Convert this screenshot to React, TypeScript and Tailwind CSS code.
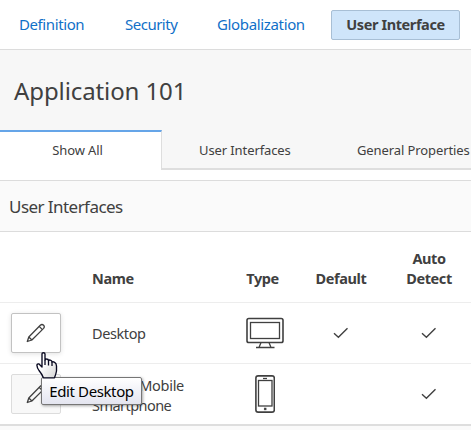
import React from "react";

function Pencil() {
  return (
    <svg width="20" height="20" viewBox="0 0 20 20" fill="none" stroke="#404040" strokeWidth="1.3" strokeLinejoin="round">
      <path d="M1.3 18.5 L2.8 14 L14.3 2.2 Q16 .7 17.6 2.2 Q19 3.8 17.6 5.4 L5.9 17 Z" />
      <path d="M2.8 14 L5.9 17 M13.2 3.4 L16.4 6.6" />
    </svg>
  );
}

function Check() {
  return (
    <svg width="16" height="12" viewBox="0 0 16 12" fill="none" stroke="#404040" strokeWidth="1.4">
      <path d="M1 6.3 L5.4 10.2 L14.5 1.3" />
    </svg>
  );
}

function Monitor() {
  return (
    <svg width="38" height="32" viewBox="0 0 38 32" fill="none" stroke="#404040" strokeWidth="1.6">
      <rect x="1" y="1.5" width="36" height="24" rx="1.8" />
      <rect x="4.5" y="5.5" width="29" height="16" strokeWidth="1.3" />
      <path d="M15 25.5 L13 30.4 M23 25.5 L25 30.4 M10 30.5 H28.5" strokeWidth="1.3" />
    </svg>
  );
}

function Phone() {
  return (
    <svg width="20" height="38" viewBox="0 0 20 38" fill="none" stroke="#404040" strokeWidth="1.6">
      <rect x="0.9" y="0.9" width="18.4" height="36.2" rx="2.2" />
      <rect x="3.5" y="5.5" width="13.5" height="25.5" strokeWidth="1.3" />
      <path d="M8 3.5 H12" strokeWidth="1.3" />
      <rect x="9.2" y="33" width="1.9" height="1.9" fill="#404040" strokeWidth="0.5" />
    </svg>
  );
}

function Hand() {
  return (
    <svg className="absolute left-[36px] top-[352px]" width="22" height="27" viewBox="0 0 22 27">
      <defs>
        <linearGradient id="hand" x1="0" y1="0" x2="1" y2="1">
          <stop offset="0.4" stopColor="#fff" />
          <stop offset="1" stopColor="#d4d4d4" />
        </linearGradient>
      </defs>
      <path
        d="M6 1.8 Q6 .7 7.4 .7 Q9 .7 9 2 V8 Q9.3 6.9 10.6 7 Q12.4 7 12.5 8.6 Q13.1 7.7 14.4 8.1 Q16 8.5 16 10 Q17 9.4 18.3 10.1 Q20.5 11.2 20.5 14 V19 Q20 22 18.5 25.8 H7.4 Q6 22 3 18.5 Q1 15.5 .9 13.2 Q1.2 11.6 3 12 L6 15 Z"
        fill="url(#hand)"
        stroke="#080820"
        strokeWidth="1.35"
        strokeLinejoin="round"
      />
      <path d="M9 8 V13 M12.5 8.5 V13.5 M16 10 V14" stroke="#080820" strokeWidth="1.3" />
    </svg>
  );
}

const columns = "grid grid-cols-[92px_135px_76px_76px_92px] items-center";

export default function App() {
  return (
    <div className="relative h-[430px] w-[471px] overflow-hidden whitespace-nowrap bg-[#fafafa] font-['Noto_Sans',sans-serif] text-[14.5px] text-[#404040]">
      <nav className="flex h-[50px] items-center border-b border-[#dcdcdc] bg-white pl-[19px] text-[#1070c8]">
        <a className="w-[106px] text-[15px] tracking-[-0.4px]">Definition</a>
        <a className="w-[92px] text-[15px] tracking-[-0.5px]">Security</a>
        <a className="w-[114px] text-[15px] tracking-[-0.35px]">Globalization</a>
        <a className="flex h-[30px] w-[129px] items-center justify-center rounded-[2px] border border-[#a8bfd5] bg-[#cfe5fa] font-bold tracking-[-0.4px] text-[#404040]">User Interface</a>
      </nav>
      <header className="h-[80px] bg-[#f7f7f7] pl-[14px] pt-[24px]">
        <h1 className="text-[24px] leading-[34px] tracking-[-0.1px]">Application 101</h1>
      </header>
      <div className="flex h-[40px] bg-[#f7f7f7] text-[13px]">
        <div className="flex w-[162px] items-center justify-center border-r border-t-2 border-r-[#dedede] border-t-[#65a5e8] bg-white pr-[6px]">
          <span className="tracking-[-0.1px]">Show All</span>
        </div>
        <div className="flex flex-1 items-center border-b-2 border-[#dedede] pl-[37px] pt-[3px]">
          <span className="w-[158px] shrink-0 tracking-[-0.1px]">User Interfaces</span>
          <span className="tracking-[-0.1px]">General Properties</span>
        </div>
      </div>
      <div className="h-[10px] bg-white" />
      <section>
        <h2 className="flex h-[52px] items-center border-y border-[#dcdcdc] bg-[#fafafa] pl-[9px] pt-[2px] text-[17px] tracking-[-0.55px]">User Interfaces</h2>
        <div className="border-b-2 border-[#dedede] bg-white">
          <div className={`${columns} h-[71px] border-b border-[#ededed] font-bold leading-[20px]`}>
            <span />
            <span className="self-end pb-[14px] tracking-[-0.4px]">Name</span>
            <span className="self-end pb-[14px] pr-[5px] text-center tracking-[-0.4px]">Type</span>
            <span className="self-end pb-[14px] text-center tracking-[-0.4px]">Default</span>
            <span className="self-end pb-[14px] pl-[8px] text-center tracking-[-0.4px]">Auto<br />Detect</span>
          </div>
          <div className={`${columns} h-[61px] border-b border-[#ededed]`}>
            <span className="ml-[11px] flex h-[40px] w-[50px] items-center justify-center rounded-[2px] border border-[#c2c2c2] bg-white shadow-[0_1px_5px_rgba(0,0,0,0.12)]"><Pencil /></span>
            <span className="pt-[2px] tracking-[-0.4px]">Desktop</span>
            <span className="flex justify-center"><Monitor /></span>
            <span className="flex justify-center"><Check /></span>
            <span className="flex justify-center pl-[8px]"><Check /></span>
          </div>
          <div className={`${columns} h-[60px]`}>
            <span className="ml-[11px] flex h-[40px] w-[50px] items-center justify-center rounded-[2px] border border-[#dcdcdc] bg-[#f8f8f8]"><Pencil /></span>
            <span className="pt-[2px] leading-[20px]"><span className="tracking-[-0.3px]">jQuery Mobile</span><br /><span className="tracking-[-0.55px]">Smartphone</span></span>
            <span className="flex justify-center"><Phone /></span>
            <span />
            <span className="flex justify-center pl-[8px]"><Check /></span>
          </div>
        </div>
      </section>
      <div className="absolute left-[41px] top-[377px] flex h-[28px] w-[101px] items-center justify-center rounded-[2px] border border-[#767676] bg-linear-to-b from-white to-[#e4e5f0] pt-px text-[15px] tracking-[-0.4px] text-black shadow-[1px_1px_3px_rgba(0,0,0,0.35)]">Edit Desktop</div>
      <Hand />
    </div>
  );
}
